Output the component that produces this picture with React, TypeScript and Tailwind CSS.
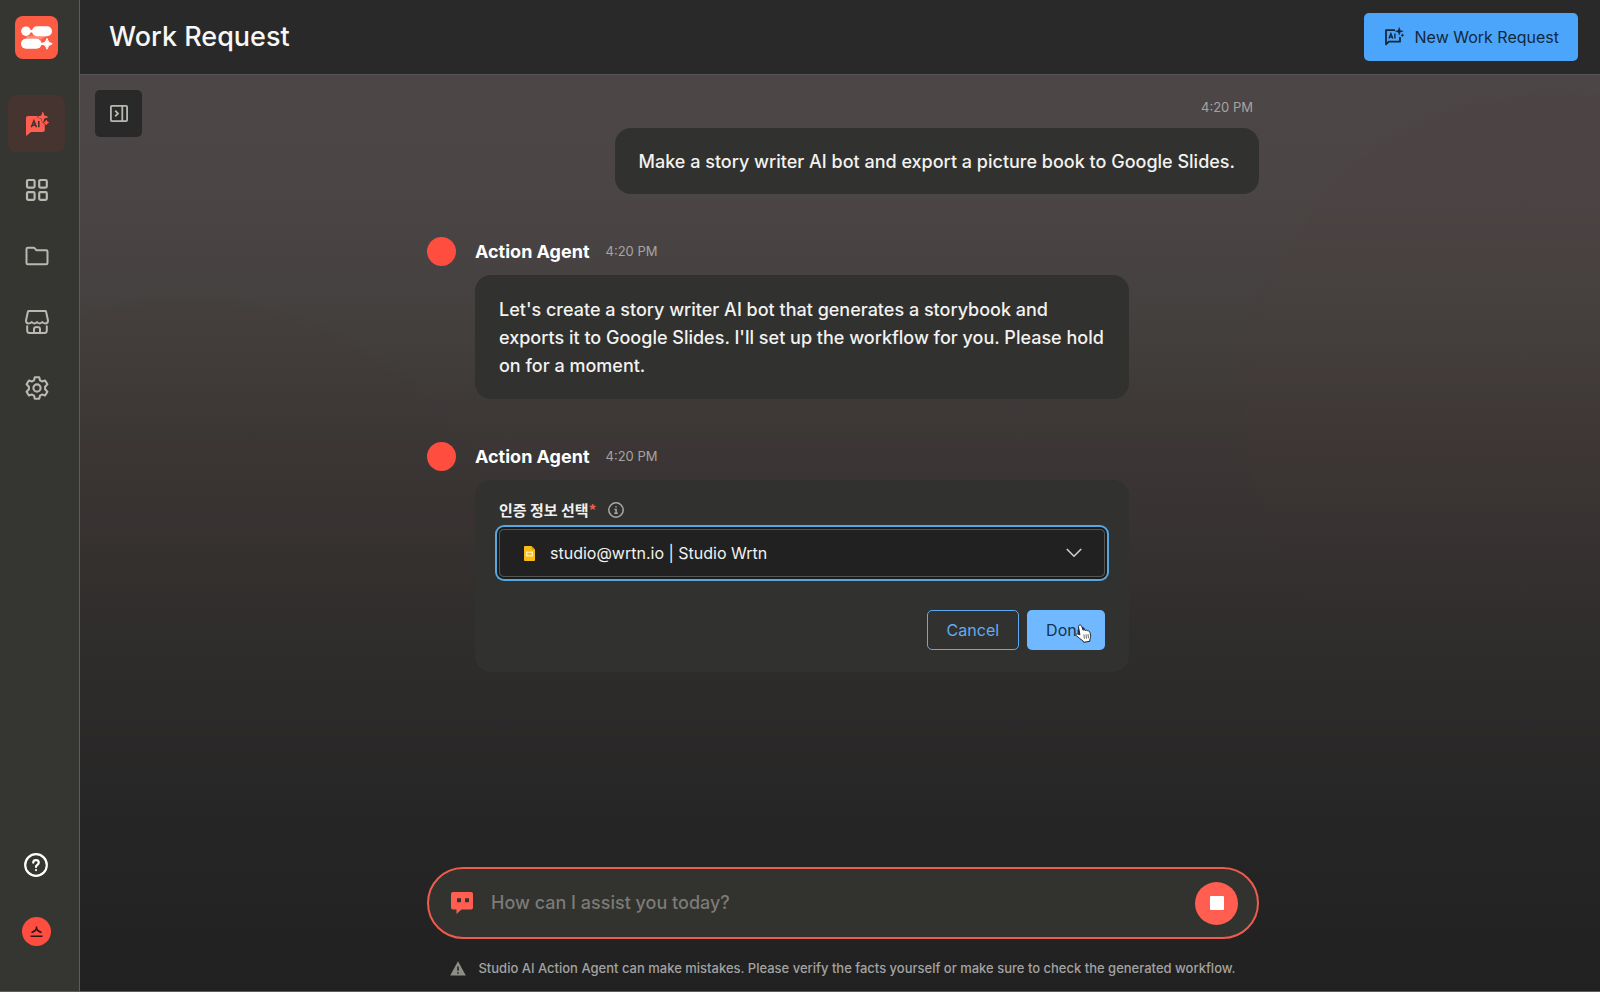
import type { ReactNode } from "react";

function AiChatSolid() {
  return (
    <svg viewBox="0 0 24 24" className="size-6" fill="#ff5e51" aria-hidden="true">
      <path d="M2.800 4H14.500L19.800 12V18a2 2 0 0 1-2 2H6L1.500 23.800Q1 24 1 23V5.800Q1 4 2.800 4Z" />
      <g stroke="#453430" strokeWidth="1.600" strokeLinejoin="round" paintOrder="stroke">
        <path d="M17.800.3 19 3.800 22.600 5 19 6.200 17.800 9.800 16.600 6.200 13 5 16.600 3.800Z" />
        <path d="M21.300 8.200 22 9.900 23.700 10.600 22 11.300 21.300 13 20.600 11.300 18.900 10.600 20.600 9.900Z" />
      </g>
      <path d="M17.800.3 19 3.800 22.600 5 19 6.200 17.800 9.800 16.600 6.200 13 5 16.600 3.800Z" stroke="#ff5e51" strokeWidth=".8" />
      <path d="M21.300 8.200 22 9.900 23.700 10.600 22 11.300 21.300 13 20.600 11.300 18.900 10.600 20.600 9.900Z" stroke="#ff5e51" strokeWidth=".8" />
      <path d="m6.300 15.300 2.600-6.400 2.600 6.400M7.200 13.300h3.400M13.800 8.900v6.400" fill="none" stroke="#46332f" strokeWidth="1.600" />
    </svg>
  );
}

function AiChatOutline() {
  return (
    <svg viewBox="0 0 20 20" className="size-5" fill="none" stroke="#14283b" aria-hidden="true">
      <path d="M11 3.200H2V17.300L4.700 14.700H16V10" strokeWidth="1.800" strokeLinejoin="round" />
      <path d="m5 11.600 1.900-5 1.900 5M5.700 10.100h2.500M10.900 6.600v5" strokeWidth="1.400" />
      <path d="M15.200 .3 16.200 3.200 19.200 4.200 16.200 5.200 15.200 8.200 14.200 5.200 11.200 4.200 14.200 3.200Z" fill="#14283b" stroke="#14283b" strokeWidth=".3" />
      <path d="M18.400 6.700 18.900 7.700 19.900 8.200 18.900 8.700 18.400 9.700 17.900 8.700 16.900 8.200 17.900 7.700Z" fill="#14283b" stroke="#14283b" strokeWidth=".4" />
    </svg>
  );
}

function GridIcon() {
  return (
    <svg viewBox="0 0 24 24" className="size-6" fill="none" stroke="#b9b8b1" strokeWidth="2.200" aria-hidden="true">
      <rect x="2" y="2" width="7.600" height="7.600" rx="1.300" />
      <rect x="14.200" y="2" width="7.600" height="7.600" rx="1.300" />
      <rect x="2" y="14.200" width="7.600" height="7.600" rx="1.300" />
      <rect x="14.200" y="14.200" width="7.600" height="7.600" rx="1.300" />
    </svg>
  );
}

function FolderIcon() {
  return (
    <svg viewBox="0 0 24 24" className="size-6" fill="none" stroke="#b9b8b1" strokeWidth="2" strokeLinejoin="round" aria-hidden="true">
      <path d="M1.500 5Q1.500 3.700 2.800 3.700H8.600Q9.200 3.700 9.600 4.200L11.300 6.200H21.200Q22.500 6.200 22.500 7.500V19Q22.500 20.300 21.200 20.300H2.800Q1.500 20.300 1.500 19Z" />
    </svg>
  );
}

function StoreIcon() {
  return (
    <svg viewBox="0 0 24 24" className="size-6" fill="none" stroke="#b9b8b1" strokeWidth="2" strokeLinejoin="round" strokeLinecap="round" aria-hidden="true">
      <path d="M3.800 1H20.200Q20.900 1 21.100 1.700L23 10.500Q23 13.400 20.300 13.400 18.400 13.400 17.300 12 16.200 13.400 14.600 13.400 13 13.400 12 12 11 13.400 9.400 13.400 7.800 13.400 6.700 12 5.600 13.400 3.700 13.400 1 13.400 1 10.500L2.900 1.700Q3.100 1 3.800 1Z" />
      <path d="M2.200 16.200V20.500Q2.200 23 4.700 23H19.300Q21.800 23 21.800 20.500V16.200M9 22.800V19Q9 17 12 17T15 19V22.800" />
    </svg>
  );
}

function GearIcon() {
  return (
    <svg viewBox="0 0 24 24" className="size-6" fill="none" stroke="#b9b8b1" strokeWidth="2.100" strokeLinejoin="round" aria-hidden="true">
      <path d="M9.800 1.200H14.200L15 4.300 17 5.400 20.100 4.500 22.400 8.300 20.100 10.700V13.300L22.400 15.700 20.100 19.500 17 18.600 15 19.700 14.200 22.800H9.800L9 19.700 7 18.600 3.900 19.500 1.600 15.700 3.900 13.300V10.700L1.600 8.300 3.900 4.500 7 5.400 9 4.300Z" />
      <circle cx="12" cy="12" r="3.600" />
    </svg>
  );
}

function Logo() {
  return (
    <svg viewBox="0 0 43 43" className="size-[43px]" aria-hidden="true">
      <rect width="43" height="43" rx="8" fill="#fc5c44" />
      <path d="M12 20 18 19.500H32L26 23.500H10Z" fill="#ff8a78" />
      <g fill="#fff">
        <circle cx="11" cy="15.200" r="4.800" />
        <rect x="13" y="14" width="8" height="2.400" />
        <rect x="17" y="10.200" width="20" height="10" rx="5" />
        <rect x="6" y="22.800" width="20.500" height="10" rx="5" />
        <rect x="24" y="26.700" width="8" height="2.200" />
        <path d="M32 22.400Q32.900 27 37.200 27.800 32.900 28.600 32 33.200 31.100 28.600 26.800 27.800 31.100 27 32 22.400Z" stroke="#fff" strokeWidth="1" />
      </g>
    </svg>
  );
}

function HandCursor() {
  return (
    <svg viewBox="0 0 17 19" className="pointer-events-none absolute left-[48px] top-[14px] h-[19px] w-[17px]" aria-hidden="true">
      <path d="M4.500 1.200C5.600.8 6.300 1.300 6.700 2.300L8.100 6.200C8.900 5.500 9.900 5.700 10.400 6.500 11.200 5.900 12.200 6.100 12.700 7 13.700 6.600 14.600 7.100 14.900 8.300 15.400 10.300 16 12 15.500 13.600L14.800 15.600V17.300L8.700 18.300 7.700 16.500C5.500 15.500 4 13.500 1.300 11.800.4 11.100 1.200 9.700 2.500 9.900L4.900 10.800 3.500 3C3.300 2.100 3.600 1.500 4.500 1.200Z" fill="#fff" stroke="#222" strokeWidth="1" />
      <path d="M8.900 10.500 9.400 14.800M11 10.300 11.500 14.600M13 10.100 13.500 14.200" stroke="#444" strokeWidth=".8" />
    </svg>
  );
}

function NavItem({ label, active, children }: { label: string; active?: boolean; children: ReactNode }) {
  return (
    <a
      href="#"
      aria-label={label}
      className={
        active
          ? "flex size-[57px] items-center justify-center rounded-lg bg-[#453430]"
          : "flex size-[57px] items-center justify-center rounded-lg"
      }
    >
      {children}
    </a>
  );
}

function Sidebar() {
  return (
    <aside className="flex w-20 shrink-0 flex-col border-r border-[#5c5c59] bg-[#353532] pt-4 pl-2">
      <a href="#" aria-label="Home" className="ml-[7px] size-[43px]">
        <Logo />
      </a>
      <nav className="mt-9 flex flex-col gap-[9px]">
        <NavItem label="Work Request" active>
          <AiChatSolid />
        </NavItem>
        <NavItem label="Apps">
          <GridIcon />
        </NavItem>
        <NavItem label="Files">
          <FolderIcon />
        </NavItem>
        <NavItem label="Store">
          <StoreIcon />
        </NavItem>
        <NavItem label="Settings">
          <GearIcon />
        </NavItem>
      </nav>
      <div className="mt-auto flex w-14 flex-col items-center gap-10 pb-[45px]">
        <button aria-label="Help" className="size-6">
          <svg viewBox="0 0 24 24" className="size-6" fill="none" stroke="#fff" strokeWidth="2.200" strokeLinecap="round">
            <circle cx="12" cy="12" r="10.800" />
            <path d="M9.200 9.600Q9.400 7.200 12 7.200T14.800 9.600Q14.800 11 13.200 12 12 12.800 12 13.900M12 17v.1" />
          </svg>
        </button>
        <button aria-label="Account" className="flex size-[29px] items-center justify-center rounded-full bg-[#ff4d40]">
          <svg viewBox="0 0 13 12" className="h-3 w-[13px]" fill="none" stroke="#2a1613" strokeWidth="1.600">
            <path d="M6.500.5V2.500Q5.500 5.500 1.500 6.500M6.500 2.500Q7.500 5.500 11.500 6.500M.5 10.300H12.500" />
          </svg>
        </button>
      </div>
    </aside>
  );
}

function AgentMessage({ children }: { children: ReactNode }) {
  return (
    <article className="grid grid-cols-[29px_minmax(0,654px)] gap-x-[19px] gap-y-[9px]">
      <span className="size-[29px] rounded-full bg-[#ff4d40]" />
      <header className="flex items-center gap-4">
        <h2 className="text-[18px] leading-7 font-bold text-white">Action Agent</h2>
        <time className="text-[13px] text-[#a8a3a1]">4:20 PM</time>
      </header>
      <div className="col-start-2 rounded-2xl bg-[#31312f] px-6">{children}</div>
    </article>
  );
}

function CredentialForm() {
  return (
    <form className="flex flex-col pt-[18px] pb-[22px]" onSubmit={(e) => e.preventDefault()}>
      <div className="flex h-[23px] items-center gap-3">
        <label htmlFor="credential" className="font-['Noto_Sans_CJK_KR',sans-serif] text-[15px] leading-[23px] font-bold text-[#f0f0ee]">
          인증 정보 선택<span className="text-[#e8604f]">*</span>
        </label>
        <svg viewBox="0 0 16 16" className="size-4" fill="none" stroke="#a9a9a5" strokeWidth="1.500" aria-hidden="true">
          <circle cx="8" cy="8" r="7.200" />
          <path d="M8 4.200V5.600M6.500 7.400H8.100V11.200M6.300 11.300H9.800" strokeWidth="1.500" />
        </svg>
      </div>
      <div className="mt-2 grid items-center rounded-[5px] shadow-[0_0_0_2px_#1b1b1b,0_0_0_4px_#57a7e0]">
        <select
          id="credential"
          className="col-start-1 row-start-1 h-12 w-full appearance-none rounded-[5px] border border-[#555553] bg-[#212121] pr-14 pl-[50px] text-base text-[#f2f2f0] outline-none"
        >
          <option>studio@wrtn.io | Studio Wrtn</option>
        </select>
        <svg viewBox="0 0 11 15" className="pointer-events-none col-start-1 row-start-1 ml-[25px] h-[15px] w-[11px]" aria-hidden="true">
          <path d="M1 0H7.500L11 3.500V14Q11 15 10 15H1Q0 15 0 14V1Q0 0 1 0Z" fill="#fbbc16" />
          <path d="M7.500 0 11 3.500H7.500Z" fill="#e09a08" />
          <rect x="2.700" y="6.200" width="5.600" height="3.600" fill="none" stroke="#fff3cf" strokeWidth="1.200" />
        </svg>
        <svg viewBox="0 0 16 10" className="pointer-events-none col-start-1 row-start-1 mr-[23px] h-2.5 w-4 justify-self-end" fill="none" stroke="#cfcfcc" strokeWidth="1.600" aria-hidden="true">
          <path d="M.8 1 8 8.200 15.200 1" />
        </svg>
      </div>
      <div className="mt-[33px] flex justify-end gap-2">
        <button type="button" className="h-10 rounded-[5px] border border-[#5fa9f0] px-[19px] text-base text-[#63abf0]">
          Cancel
        </button>
        <button type="submit" className="relative h-10 rounded-[5px] bg-[#70b8ff] px-[19px] text-base text-[#17324a]">
          Done
          <HandCursor />
        </button>
      </div>
    </form>
  );
}

function Composer() {
  return (
    <form className="mt-auto" onSubmit={(e) => e.preventDefault()}>
      <div className="flex h-[72px] items-center rounded-[36px] border-2 border-[#ee5c50] bg-[#32322f] pr-[19px] pl-[22px]">
        <svg viewBox="0 0 22 22" className="size-[22px] shrink-0" fill="#ff5e51" aria-hidden="true">
          <path fillRule="evenodd" d="M2 0H20Q22 0 22 2V15.500Q22 17.500 20 17.500H10.500L5.500 22V17.500H2Q0 17.500 0 15.500V2Q0 0 2 0ZM6 6.200V10.200H10V6.200ZM14 6.200V10.200H18V6.200Z" />
        </svg>
        <input
          type="text"
          aria-label="Message"
          placeholder="How can I assist you today?"
          className="ml-[18px] min-w-0 flex-1 bg-transparent text-[18px] leading-7 font-medium text-[#eee] outline-none placeholder:text-[#7b7b77]"
        />
        <button aria-label="Stop" className="flex size-[43px] items-center justify-center rounded-full bg-[#ff5e51]">
          <span className="size-3.5 rounded-[1px] bg-white" />
        </button>
      </div>
      <p className="mt-[18px] flex items-center justify-center gap-3 text-[13px] leading-[22px] font-medium text-[#a3a3a1]">
        <svg viewBox="0 0 16 15" className="h-[15px] w-4 shrink-0" aria-hidden="true">
          <path d="M8 .3 15.800 14.500H.2Z" fill="#8f8e86" />
          <path d="M8 5.500V9.800M8 11.200V12.800" stroke="#232323" strokeWidth="1.600" />
        </svg>
        Studio AI Action Agent can make mistakes. Please verify the facts yourself or make sure to check the generated workflow.
      </p>
    </form>
  );
}

export default function App() {
  return (
    <div className="flex min-h-screen border-b border-[#5c5c59] bg-[#222] font-['Inter','Noto_Sans_CJK_KR',sans-serif] text-white">
      <Sidebar />
      <div className="flex min-w-0 flex-1 flex-col">
        <header className="flex h-[75px] items-center justify-between border-b border-[#585654] bg-[#292929] pr-[22px] pl-[29px]">
          <h1 className="text-[27px] leading-9 font-medium text-[#f7f7f5]">Work Request</h1>
          <button className="flex h-12 items-center gap-[11px] rounded-[5px] bg-[#4ba5fb] pr-[19px] pl-5 text-base text-[#14283b]">
            <AiChatOutline />
            New Work Request
          </button>
        </header>
        <main className="flex flex-1 items-stretch bg-[linear-gradient(to_bottom,#36333300_30%,#36323180_50%,#2f2d2c_62%,#272626_80%,#212121_100%),radial-gradient(circle_318px_at_97%_36%,#50303012_0%,#50303012_96%,transparent_100%),radial-gradient(circle_350px_at_7%_62%,#3828180f_0%,#3828180f_96%,transparent_100%),linear-gradient(to_bottom,#4c4646_0%,#4b4545_13%,#464241_22%,#423e3c_30%,#3b3635_45%,#2f2d2c_62%)] pt-[15px] pl-[15px]">
          <button aria-label="Expand panel" className="flex size-[47px] shrink-0 items-center justify-center rounded-[5px] bg-[#292929]">
            <svg viewBox="0 0 18 17" className="h-[17px] w-[18px]" fill="none" stroke="#b9b8b1" strokeWidth="1.800">
              <rect x=".9" y=".9" width="16.200" height="15.200" rx="1" />
              <path d="M12.300 1V16M5.200 5.700 8 8.500 5.200 11.300" />
            </svg>
          </button>
          <div className="flex flex-1 flex-col items-center pr-14">
            <div className="flex w-full max-w-[832px] flex-1 flex-col pb-3">
              <article className="flex flex-col items-end pt-[6px]">
                <time className="mr-[6px] text-[13px] leading-[22px] text-[#a8a3a1]">4:20 PM</time>
                <p className="mt-[10px] rounded-2xl bg-[#31312f] px-6 pt-5 pb-[18px] text-[18px] leading-7 font-medium text-[#f2f2f0]">
                  Make a story writer AI bot and export a picture book to Google Slides.
                </p>
              </article>
              <div className="mt-[43px] flex flex-col gap-[43px]">
                <AgentMessage>
                  <p className="pt-[21px] pb-[19px] text-[18px] leading-7 font-medium text-[#f2f2f0]">
                    Let's create a story writer AI bot that generates a storybook and exports it to Google Slides. I'll set up the workflow for you. Please hold on for a moment.
                  </p>
                </AgentMessage>
                <AgentMessage>
                  <CredentialForm />
                </AgentMessage>
              </div>
              <Composer />
            </div>
          </div>
        </main>
      </div>
    </div>
  );
}
